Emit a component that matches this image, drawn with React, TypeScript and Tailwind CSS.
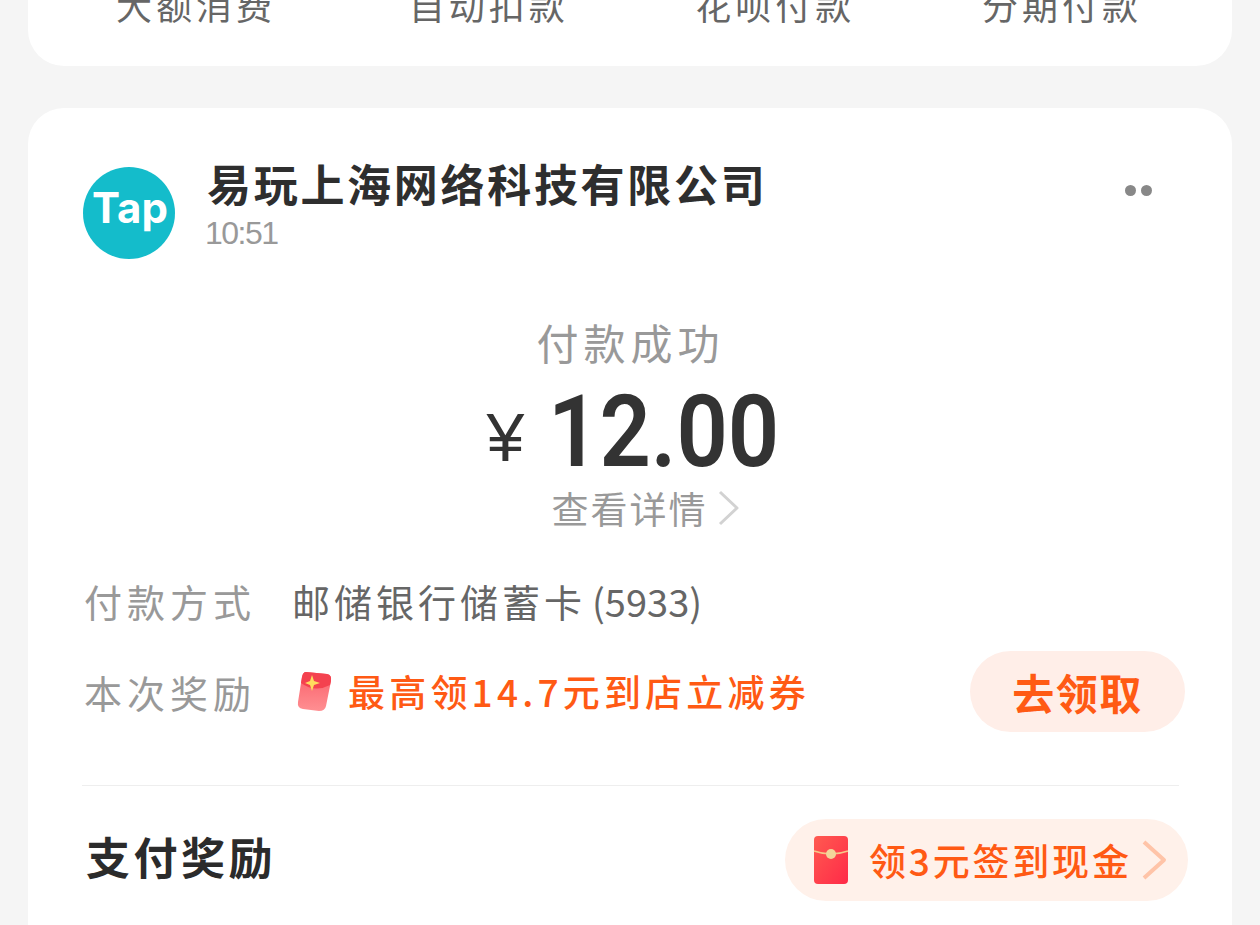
const CJK = "font-['Noto_Sans_CJK_SC','Noto_Sans',sans-serif]";

function TapLogo() {
  return (
    <svg viewBox="0 0 92 92" className="w-[92px] h-[92px] shrink-0">
      <circle cx="46" cy="46" r="46" fill="#14bccb" />
      <text x="47" y="56" textAnchor="middle" fontSize="42" fontWeight="700" fill="#ffffff" fontFamily="'Inter', 'Liberation Sans', sans-serif">Tap</text>
    </svg>
  );
}

function Chevron({ w, h, color, sw }: { w: number; h: number; color: string; sw: number }) {
  return (
    <svg width={w} height={h} viewBox={`0 0 ${w} ${h}`} fill="none">
      <path d={`M2 2 L${w - 3} ${h / 2} L2 ${h - 2}`} stroke={color} strokeWidth={sw} strokeLinejoin="round" />
    </svg>
  );
}

function SmallPacket() {
  return (
    <svg width="36" height="42" viewBox="0 0 36 42">
      <defs>
        <linearGradient id="sp-body" x1="0" y1="0" x2="0" y2="1">
          <stop offset="0" stopColor="#f9606a" />
          <stop offset="1" stopColor="#ff8f92" />
        </linearGradient>
      </defs>
      <path d="M9 1 L30 3 Q35 4 34 10 L29 35 Q28 40 22 40 L6 38 Q0 37 1 31 L5 6 Q6 1 9 1 Z" fill="url(#sp-body)" />
      <path d="M5 6 Q6 1 9 1 L30 3 Q35 4 34 10 L33 14 Q18 22 4 12 Z" fill="#f4424f" />
      <path d="M15 4 L17 10 L23 12 L17 14 L15 20 L13 14 L8 12 L13 10 Z" fill="#ffdc5e" />
    </svg>
  );
}

function BigPacket() {
  return (
    <svg width="36" height="50" viewBox="0 0 36 50">
      <defs>
        <linearGradient id="bp-body" x1="0" y1="0" x2="1" y2="1">
          <stop offset="0" stopColor="#ff5a50" />
          <stop offset="1" stopColor="#ff2a48" />
        </linearGradient>
      </defs>
      <rect x="1" y="1" width="34" height="48" rx="4" fill="url(#bp-body)" />
      <path d="M1 16 Q18 22 35 16" stroke="#f6c889" strokeWidth="1.5" fill="none" />
      <circle cx="18" cy="19" r="5" fill="#f3d59a" />
    </svg>
  );
}

export default function App() {
  return (
    <div className={`h-[925px] overflow-hidden bg-[#f5f5f5] px-[28px] ${CJK}`}>
      {/* cut off card above */}
      <div className="h-[66px] bg-white rounded-b-[36px] flex items-end pb-[40px] pl-[88px] pr-[90px] justify-between text-[#666666] text-[36px] leading-[44px] tracking-[4px]">
        <span>大额消费</span>
        <span className="ml-[6px]">自动扣款</span>
        <span>花呗付款</span>
        <span>分期付款</span>
      </div>

      <div className="mt-[42px] bg-white rounded-[36px] h-[900px] pl-[55px] pr-[46px]">
        <div className="flex pt-[59px] pr-[34px]">
          <TapLogo />
          <div className="ml-[32px] flex-1 -mt-[10px]">
            <div className="text-[44px] leading-[52px] font-bold tracking-[2.7px] text-[#2e2e2e]">易玩上海网络科技有限公司</div>
            <div className="mt-[4px] -ml-[2px] text-[32px] leading-[40px] tracking-[-1.5px] text-[#999999] font-['Liberation_Sans',sans-serif]">10:51</div>
          </div>
          <div className="flex gap-[5px] pt-[18px]">
            <span className="w-[11px] h-[11px] rounded-full bg-[#888888]" />
            <span className="w-[11px] h-[11px] rounded-full bg-[#888888]" />
          </div>
        </div>

        <div className="flex flex-col items-center mt-[55px] pr-[8px]">
          <div className="text-[42px] leading-[56px] tracking-[5px] text-[#999999]">付款成功</div>
          <div className="mt-[13px] flex items-baseline h-[98px] text-[#333333] font-['Roboto',sans-serif] font-semibold">
            <span className="inline-block -translate-y-[5px] text-[68px] leading-[98px] font-normal mr-[24px] font-['Liberation_Sans',sans-serif]">¥</span>
            <span className="inline-block w-[226px] origin-left scale-x-[0.9] text-[100px] leading-[98px]">12.00</span>
          </div>
          <div className="mt-[5px] flex items-center gap-[10px] h-[44px] ml-[30px]">
            <span className="text-[37px] leading-[44px] tracking-[2px] text-[#999999]">查看详情</span>
            <Chevron w={22} h={36} color="#d2d2d2" sw={3} />
          </div>
        </div>

        <div className="mt-[46px] flex items-center h-[50px] text-[38px] leading-[50px] tracking-[5px]">
          <span className="w-[209px] text-[#999999] pl-[1px]">付款方式</span>
          <span className="text-[#666666] tracking-[4px]">邮储银行储蓄卡</span>
          <span className="text-[#666666] tracking-normal ml-[6px]">(5933)</span>
        </div>

        <div className="mt-[25px] flex items-center h-[81px] text-[38px] tracking-[5px]">
          <span className="w-[214px] text-[#999999] pl-[1px]">本次奖励</span>
          <SmallPacket />
          <span className="ml-[15px] flex-1 text-[#ff5a14] text-[37px] font-medium tracking-[4.2px]">最高领14.7元到店立减券</span>
          <span className="w-[215px] h-[81px] mr-[1px] rounded-full bg-[#ffeee8] flex items-center justify-center text-[#ff5a14] font-bold text-[42px] tracking-[1.5px]">去领取</span>
        </div>

        <div className="mt-[53px] h-px bg-[#eeeeee] -ml-[1px] mr-[7px]" />

        <div className="mt-[33px] flex items-center justify-between -mr-[2px]">
          <span className="pl-[3px] pb-[8px] text-[44px] font-bold tracking-[3.5px] text-[#2b2b2b]">支付奖励</span>
          <div className="w-[403px] h-[82px] rounded-full bg-[#fff1ea] flex items-center pl-[28px]">
            <BigPacket />
            <span className="ml-[20px] text-[37px] leading-[50px] tracking-[2.8px] font-medium text-[#ff5a14]">领3元签到现金</span>
            <span className="ml-[10px] flex">
              <Chevron w={25} h={40} color="#ffc4a8" sw={4} />
            </span>
          </div>
        </div>
      </div>
    </div>
  );
}
